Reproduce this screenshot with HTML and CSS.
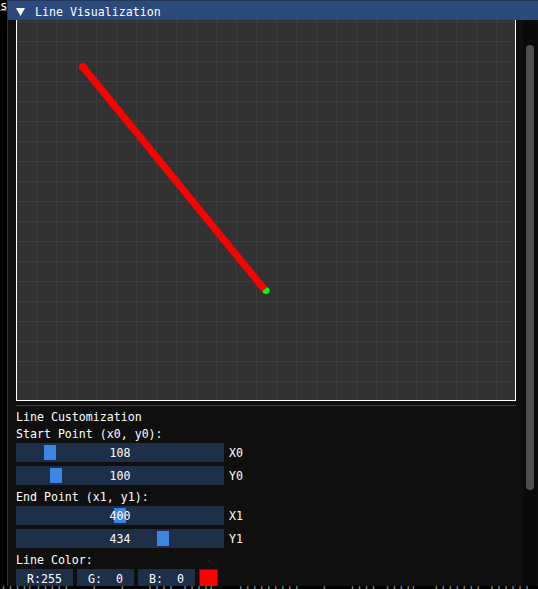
FILE: index.html
```html
<!DOCTYPE html>
<html>
<head>
<meta charset="utf-8">
<link rel="stylesheet" href="styles.css">
</head>
<body>
<div class="desk">
  <div class="bg-s">s</div>
  <div class="bg-strip"><span class="strip-text">IIIIEIIIII  .I  .I  .IIII IIIIE  .IIIIIIIII  .I  .IIII IIIIE .IIIIIII IIIIII  .II</span></div>
  <div class="win">
    <div class="title">
      <svg class="tri" width="9" height="8" viewBox="0 0 9 8"><polygon points="0,0 9,0 4.5,8" fill="#fff"/></svg>
      <span class="title-text">Line Visualization</span>
    </div>
    <div class="body">
      <div class="scrollview">
        <div class="content">
          <svg class="canvas" width="500" height="400" viewBox="0 0 500 400">
            <defs>
              <pattern id="grid" width="20" height="20" patternUnits="userSpaceOnUse">
                <rect x="0" y="0" width="20" height="1" fill="#3d3d3d"/>
                <rect x="0" y="0" width="1" height="20" fill="#3d3d3d"/>
              </pattern>
            </defs>
            <rect x="0" y="0" width="500" height="400" fill="#323232"/>
            <rect x="0" y="0" width="500" height="400" fill="url(#grid)"/>
            <circle cx="250" cy="289.5" r="3.6" fill="#00ff00"/>
            <line x1="67" y1="66" x2="248.5" y2="288.5" stroke="#ff0000" stroke-width="7"/>
            <circle cx="67" cy="66" r="4" fill="#ff0000"/>
            <rect x="0.5" y="0.5" width="499" height="399" fill="none" stroke="#ffffff" stroke-width="1"/>
          </svg>
          <div class="sep"></div>
          <div class="rows">
            <div class="text"><span class="t">Line Customization</span></div>
            <div class="text"><span class="t">Start Point (x0, y0):</span></div>
            <div class="slider-row">
              <div class="slider"><div class="grab g-x0"></div><span class="val">108</span></div>
              <span class="lbl">X0</span>
            </div>
            <div class="slider-row">
              <div class="slider"><div class="grab g-y0"></div><span class="val">100</span></div>
              <span class="lbl">Y0</span>
            </div>
            <div class="text"><span class="t">End Point (x1, y1):</span></div>
            <div class="slider-row">
              <div class="slider"><div class="grab g-x1"></div><span class="val">400</span></div>
              <span class="lbl">X1</span>
            </div>
            <div class="slider-row">
              <div class="slider"><div class="grab g-y1"></div><span class="val">434</span></div>
              <span class="lbl">Y1</span>
            </div>
            <div class="text"><span class="t">Line Color:</span></div>
            <div class="btn-row">
              <div class="btn"><span class="bval">R:255</span></div>
              <div class="btn"><span class="bval">G:  0</span></div>
              <div class="btn"><span class="bval">B:  0</span></div>
              <div class="swatch"></div>
            </div>
          </div>
        </div>
      </div>
      <div class="scrollbar"><div class="sgrab"></div></div>
    </div>
  </div>
</div>
</body>
</html>
```
FILE: styles.css
```css
html, body {
  margin: 0;
  padding: 0;
  background: #000;
  overflow: hidden;
}
.desk {
  position: relative;
  width: 538px;
  height: 589px;
  background: #000;
  font-family: "DejaVu Sans Mono", "Liberation Mono", monospace;
  font-size: 11.6px;
  line-height: 13px;
  color: #fff;
  overflow: hidden;
}
.bg-s {
  position: absolute;
  left: 0;
  top: -1px;
  width: 7px;
  height: 11px;
  overflow: hidden;
  border-bottom: 1px solid #5a5a5a;
  color: #fff;
  font-size: 12.5px;
}
.bg-strip {
  position: absolute;
  left: 0;
  top: 586px;
  width: 538px;
  height: 3px;
  overflow: hidden;
}
.strip-text {
  display: block;
  line-height: 9px;
  white-space: pre;
  color: #8a8f99;
}
.win {
  position: absolute;
  left: 7px;
  top: 0;
  width: 530px;
  height: 586px;
  border-left: 1px solid #333;
  border-right: 1px solid #1c1c1c;
  background: #0f0f0f;
  display: flex;
  flex-direction: column;
  overflow: hidden;
}
.title {
  height: 20px;
  flex: none;
  box-sizing: border-box;
  background: #294a7a;
  border-top: 1px solid #22375a;
  display: flex;
  align-items: center;
  padding: 2px 0 0 8px;
  white-space: pre;
}
.title-text {
  position: relative;
  top: 1px;
}
.tri {
  display: block;
  margin-right: 10px;
  margin-top: 1px;
}
.body {
  flex: 1;
  display: flex;
  min-height: 0;
}
.scrollview {
  width: 515px;
  flex: none;
  overflow: hidden;
}
.content {
  margin-top: -19px;
  padding-left: 8px;
}
.canvas {
  display: block;
}
.sep {
  width: 500px;
  height: 1px;
  background: #41414b;
  margin: 4px 0 3px;
}
.rows {
  display: flex;
  flex-direction: column;
  gap: 4px;
}
.text {
  height: 13px;
  white-space: pre;
}
.t {
  position: relative;
  top: 2px;
}
.slider-row {
  display: flex;
  align-items: center;
  gap: 5px;
  height: 19px;
}
.slider {
  position: relative;
  width: 208px;
  height: 19px;
  background: #1d2f49;
  display: flex;
  align-items: center;
  justify-content: center;
}
.grab {
  position: absolute;
  top: 2px;
  width: 12px;
  height: 15px;
  background: #3d85e0;
}
.g-x0 { left: 28px; }
.g-y0 { left: 34px; }
.g-x1 { left: 98px; }
.g-y1 { left: 141px; }
.val {
  position: relative;
  top: 1px;
  white-space: pre;
}
.lbl {
  position: relative;
  top: 1px;
  white-space: pre;
}
.btn-row {
  display: flex;
  gap: 4px;
  height: 19px;
}
.btn {
  width: 57px;
  height: 19px;
  background: #1d2f49;
  display: flex;
  align-items: center;
  justify-content: center;
  white-space: pre;
}
.bval {
  line-height: 11px;
  position: relative;
  top: 1px;
}
.swatch {
  width: 17px;
  height: 18px;
  background: #ff0000;
  border: 1px solid #1d2f49;
}
.scrollbar {
  width: 14px;
  flex: none;
  background: #0a0a0a;
  position: relative;
}
.sgrab {
  margin: 25px 3px 0;
  width: 8px;
  height: 445px;
  background: #4f4f4f;
  border-radius: 4px;
}
```
